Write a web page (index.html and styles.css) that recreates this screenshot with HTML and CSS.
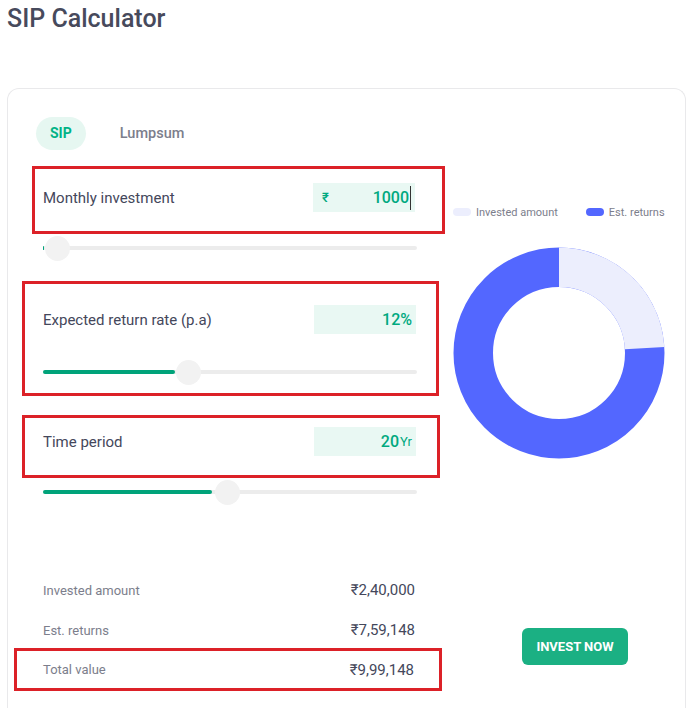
FILE: index.html
```html
<!DOCTYPE html>
<html>
<head>
<meta charset="utf-8">
<link rel="stylesheet" href="styles.css">
</head>
<body>
<h1 class="title">SIP Calculator</h1>
<div class="card">
  <div class="left">
    <div class="tabs">
      <span class="tab tab-active">SIP</span>
      <span class="tab">Lumpsum</span>
    </div>

    <div class="mark box1">
      <div class="field">
        <span class="label">Monthly investment</span>
        <span class="input input-money"><span class="rupee">₹</span><span class="num caret">1000</span></span>
      </div>
    </div>
    <div class="slider s1"><div class="fill" style="width:1px"></div><div class="thumb" style="left:14px"></div></div>

    <div class="mark box2">
      <div class="field">
        <span class="label">Expected return rate (p.a)</span>
        <span class="input"><span class="num">12%</span></span>
      </div>
      <div class="slider s2"><div class="fill" style="width:132px"></div><div class="thumb" style="left:145px"></div></div>
    </div>

    <div class="mark box3">
      <div class="field">
        <span class="label">Time period</span>
        <span class="input"><span class="num">20</span><span class="unit">Yr</span></span>
      </div>
    </div>
    <div class="slider s3"><div class="fill" style="width:169px"></div><div class="thumb" style="left:184px"></div></div>

    <div class="summary">
      <div class="row"><span class="k">Invested amount</span><span class="v">₹2,40,000</span></div>
      <div class="row"><span class="k">Est. returns</span><span class="v">₹7,59,148</span></div>
      <div class="mark total">
        <div class="row row-total"><span class="k">Total value</span><span class="v">₹9,99,148</span></div>
      </div>
    </div>
  </div>

  <div class="right">
    <div class="legend">
      <span class="leg"><span class="sw sw-inv"></span>Invested amount</span>
      <span class="leg"><span class="sw sw-ret"></span>Est. returns</span>
    </div>
    <svg class="donut" width="212" height="212" viewBox="0 0 212 212">
      <circle cx="106" cy="106" r="85.75" fill="none" stroke="#5367ff" stroke-width="39.5"/>
      <circle cx="106" cy="106" r="85.75" fill="none" stroke="#eceefd" stroke-width="39.5" stroke-dasharray="129.4 600" transform="rotate(-90 106 106)"/>
    </svg>
    <button class="invest">INVEST NOW</button>
  </div>
</div>
</body>
</html>
```
FILE: styles.css
```css
* { box-sizing: border-box; }
body {
  margin: 0;
  font-family: Roboto, "Liberation Sans", sans-serif;
  background: #fff;
  color: #44475b;
  overflow: hidden;
}
.title {
  margin: 0;
  padding: 5px 0 0 7px;
  font-size: 25px;
  line-height: 28px;
  font-weight: 500;
  color: #474a5c;
}
.card {
  margin: 55px 8px 0 7px;
  border: 1px solid #e9e9eb;
  border-bottom: none;
  border-radius: 12px 12px 0 0;
  height: 640px;
  display: flex;
}
.left {
  width: 440px;
  flex: none;
  padding-top: 28px;
}
.tabs {
  display: flex;
  align-items: center;
  margin-left: 28px;
  height: 33px;
  gap: 34px;
}
.tab {
  font-size: 14.5px;
  font-weight: 500;
  color: #7c7e8c;
}
.tab-active {
  background: #e6f7f1;
  color: #00b386;
  font-weight: 700;
  font-size: 14px;
  height: 33px;
  line-height: 33px;
  padding: 0 14px;
  border-radius: 17px;
}
.mark {
  border: 3px solid #dc2128;
}
.box1 {
  margin: 16px 0 0 24px;
  width: 413px;
  height: 68px;
  padding: 14px 27px 0 8px;
}
.box2 {
  margin: 21px 0 0 14px;
  width: 417px;
  height: 115px;
  padding: 21px 20px 0 18px;
}
.box3 {
  margin: 19px 0 0 14px;
  width: 418px;
  height: 63px;
  padding: 9px 21px 0 18px;
}
.field {
  display: flex;
  align-items: center;
  justify-content: space-between;
  height: 29px;
}
.label {
  font-size: 15px;
  color: #44475b;
}
.input {
  width: 102px;
  height: 29px;
  background: #e9f8f3;
  display: flex;
  align-items: center;
  justify-content: flex-end;
  padding: 0 4px 0 9px;
  color: #00a97f;
  font-weight: 500;
  font-size: 16px;
}
.input-money { justify-content: space-between; }
.rupee { font-size: 13px; }
.caret { border-right: 1px solid #333; padding-right: 1px; line-height: 24px; }
.unit { font-size: 13px; font-weight: 400; margin-left: 1px; }
.slider {
  position: relative;
  width: 374px;
  height: 24px;
}
.slider::before {
  content: "";
  position: absolute;
  left: 0; right: 0; top: 10px;
  height: 4px;
  background: #ececec;
  border-radius: 2px;
}
.fill {
  position: absolute;
  left: 0; top: 10px;
  height: 4px;
  background: #00a37a;
  border-radius: 2px;
}
.thumb {
  position: absolute;
  top: 0;
  width: 25px;
  height: 25px;
  margin-left: -12.5px;
  border-radius: 50%;
  background: #f2f2f2;
}
.s1 { margin: 2px 0 0 35px; }
.s2 { margin: 26px 0 0 0; }
.s3 { margin: 2px 0 0 35px; }
.summary {
  margin-top: 66px;
}
.row {
  display: flex;
  justify-content: space-between;
  align-items: center;
  height: 40px;
  margin-left: 35px;
  width: 372px;
}
.k { font-size: 13px; color: #7c7e8c; }
.v { font-size: 15px; color: #44475b; }
.total {
  margin: -2px 0 0 6px;
  width: 428px;
  height: 43px;
  padding: 0 25px 0 26px;
}
.row-total { margin: 0; width: 100%; height: 37px; }
.right {
  flex: 1;
  display: flex;
  flex-direction: column;
  align-items: flex-start;
  padding: 116px 0 0 5px;
}
.legend {
  display: flex;
  gap: 28px;
  height: 14px;
  align-items: center;
}
.leg {
  display: flex;
  align-items: center;
  gap: 5px;
  font-size: 11px;
  color: #7c7e8c;
}
.sw {
  width: 18px;
  height: 8px;
  border-radius: 4px;
}
.sw-inv { background: #eceefd; }
.sw-ret { background: #5367ff; }
.donut {
  margin-top: 28px;
  display: block;
}
.invest {
  margin: 169px 0 0 69px;
  width: 106px;
  height: 37px;
  border: none;
  border-radius: 6px;
  background: #1bb083;
  color: #fff;
  font-family: Roboto, "Liberation Sans", sans-serif;
  font-size: 13px;
  font-weight: 700;
}
```
